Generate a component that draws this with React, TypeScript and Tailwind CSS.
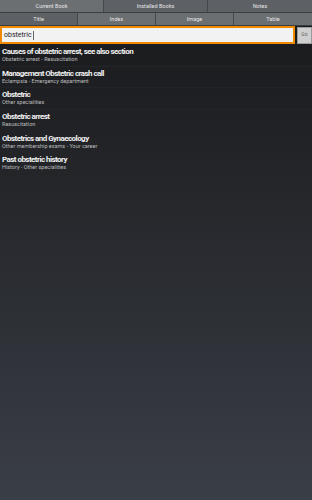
const topTabs = ["Current Book", "Installed Books", "Notes"];
const subTabs = ["Title", "Index", "Image", "Table"];

const results = [
  { title: "Causes of obstetric arrest, see also section", sub: "Obstetric arrest - Resuscitation" },
  { title: "Management Obstetric crash call", sub: "Eclampsia - Emergency department" },
  { title: "Obstetric", sub: "Other specialities" },
  { title: "Obstetric arrest", sub: "Resuscitation" },
  { title: "Obstetrics and Gynaecology", sub: "Other membership exams - Your career" },
  { title: "Past obstetric history", sub: "History - Other specialities" },
];

export default function App() {
  return (
    <div
      className="flex h-[500px] w-[312px] flex-col overflow-hidden bg-gradient-to-b from-[#18191b] to-[#3a3e46]"
      style={{ fontFamily: "Roboto, 'Liberation Sans', sans-serif" }}
    >
      <div className="grid grid-cols-3 border-b border-[#3b3e41]">
        {topTabs.map((t, i) => (
          <div
            key={t}
            className={`flex h-[12px] items-center justify-center border-r border-[#46494c] text-[5.5px] text-[#e6e6e6] last:border-r-0 ${
              i === 0 ? "bg-[#6c6f72]" : "bg-[#5d6064]"
            }`}
          >
            {t}
          </div>
        ))}
      </div>
      <div className="grid grid-cols-4 border-b border-[#3b3e41]">
        {subTabs.map((t, i) => (
          <div
            key={t}
            className={`flex h-[12px] items-center justify-center border-r border-[#46494c] text-[5.5px] text-[#e6e6e6] last:border-r-0 ${
              i === 0 ? "bg-[#5d6064]" : "bg-[#6c6f72]"
            }`}
          >
            {t}
          </div>
        ))}
      </div>
      <div className="flex items-center gap-[2px]">
        <div className="flex h-[18px] flex-1 items-center border-2 border-[#f08a00] bg-[#f2f2f2] px-[2px] text-[7px] text-[#222]">
          obstetric<span className="ml-[1px] h-[9px] w-px bg-[#666]" />
        </div>
        <div className="flex h-[17px] w-[15px] items-center justify-center border border-[#9a9a9a] bg-[#cfcfcf] text-[5px] text-[#666]">
          Go
        </div>
      </div>
      <div className="mt-[1px] flex flex-col">
        {results.map((r) => (
          <div key={r.title} className="flex h-[21.6px] flex-col justify-center border-b border-[#222426] px-[2px]">
            <div className="text-[8px] font-bold leading-[9px] tracking-[-0.55px] text-[#f0f0f0]">{r.title}</div>
            <div className="text-[5.5px] leading-[7px] text-[#bdbdbd]">{r.sub}</div>
          </div>
        ))}
      </div>
    </div>
  );
}
